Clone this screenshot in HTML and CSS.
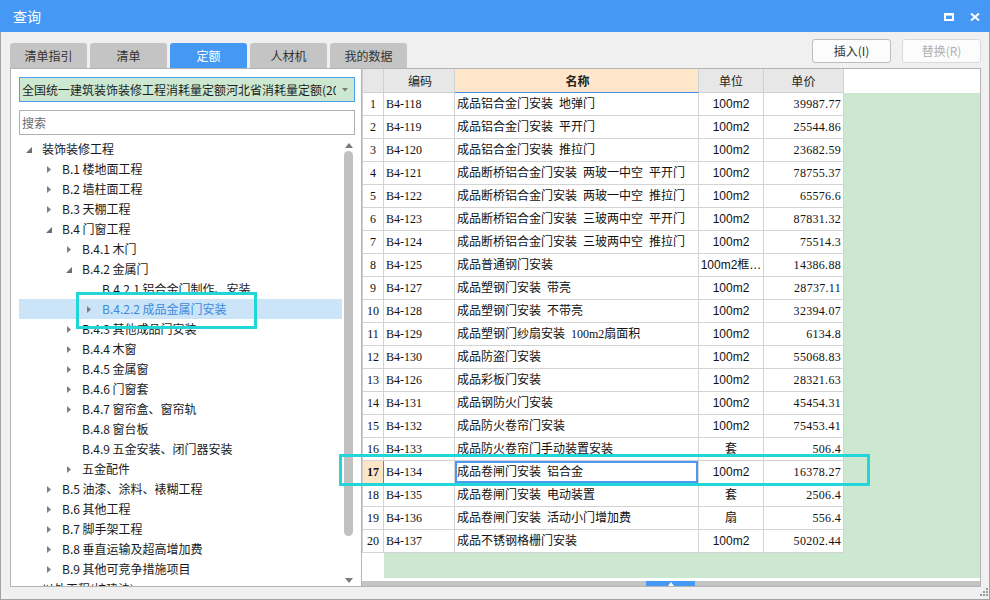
FILE: index.html
```html
<!DOCTYPE html>
<html lang="zh-CN">
<head>
<meta charset="utf-8">
<title>查询</title>
<link rel="stylesheet" href="styles.css">
</head>
<body>
<div class="win">
  <div class="titlebar">
    <span class="title">查询</span>
    <div class="tb-icons">
      <svg width="10" height="8" viewBox="0 0 10 8"><rect x="1" y="1" width="8" height="6" fill="none" stroke="#fff" stroke-width="2"/><rect x="0" y="0" width="10" height="2.6" fill="#fff"/></svg>
      <svg width="10" height="8" viewBox="0 0 10 8"><path d="M1 0.5 L9 7.5 M9 0.5 L1 7.5" stroke="#fff" stroke-width="2"/></svg>
    </div>
  </div>

  <div class="toolbar">
    <div class="tabs">
      <div class="tab">清单指引</div>
      <div class="tab">清单</div>
      <div class="tab active">定额</div>
      <div class="tab">人材机</div>
      <div class="tab">我的数据</div>
    </div>
    <div class="btns">
      <div class="btn">插入(I)</div>
      <div class="btn dis">替换(R)</div>
    </div>
  </div>

  <div class="content">
    <div class="left">
      <div class="combo">
        <span class="combo-text">全国统一建筑装饰装修工程消耗量定额河北省消耗量定额(2023)</span>
        <svg class="combo-arrow" width="6" height="4" viewBox="0 0 6 4"><polygon points="0,0 6,0 3,3.5" fill="#7a7a7a"/></svg>
      </div>
      <div class="search">搜索</div>
      <div class="tree-wrap">
        <div class="tree">
          <div class="trow l0"><span class="arr"><svg class="ex" width="6" height="6" viewBox="0 0 6 6"><polygon points="6,0 6,6 0,6" fill="#6e6e6e"/></svg></span>装饰装修工程</div>
          <div class="trow l1"><span class="arr"><svg class="co" width="4" height="7" viewBox="0 0 4 7"><polygon points="0,0 4,3.5 0,7" fill="#7f7f7f"/></svg></span>B.1 楼地面工程</div>
          <div class="trow l1"><span class="arr"><svg class="co" width="4" height="7" viewBox="0 0 4 7"><polygon points="0,0 4,3.5 0,7" fill="#7f7f7f"/></svg></span>B.2 墙柱面工程</div>
          <div class="trow l1"><span class="arr"><svg class="co" width="4" height="7" viewBox="0 0 4 7"><polygon points="0,0 4,3.5 0,7" fill="#7f7f7f"/></svg></span>B.3 天棚工程</div>
          <div class="trow l1"><span class="arr"><svg class="ex" width="6" height="6" viewBox="0 0 6 6"><polygon points="6,0 6,6 0,6" fill="#6e6e6e"/></svg></span>B.4 门窗工程</div>
          <div class="trow l2"><span class="arr"><svg class="co" width="4" height="7" viewBox="0 0 4 7"><polygon points="0,0 4,3.5 0,7" fill="#7f7f7f"/></svg></span>B.4.1 木门</div>
          <div class="trow l2"><span class="arr"><svg class="ex" width="6" height="6" viewBox="0 0 6 6"><polygon points="6,0 6,6 0,6" fill="#6e6e6e"/></svg></span>B.4.2 金属门</div>
          <div class="trow l3"><span class="arr"></span>B.4.2.1 铝合金门制作、安装</div>
          <div class="trow l3 sel"><span class="arr"><svg class="co" width="4" height="7" viewBox="0 0 4 7"><polygon points="0,0 4,3.5 0,7" fill="#7f7f7f"/></svg></span>B.4.2.2 成品金属门安装</div>
          <div class="trow l2"><span class="arr"><svg class="co" width="4" height="7" viewBox="0 0 4 7"><polygon points="0,0 4,3.5 0,7" fill="#7f7f7f"/></svg></span>B.4.3 其他成品门安装</div>
          <div class="trow l2"><span class="arr"><svg class="co" width="4" height="7" viewBox="0 0 4 7"><polygon points="0,0 4,3.5 0,7" fill="#7f7f7f"/></svg></span>B.4.4 木窗</div>
          <div class="trow l2"><span class="arr"><svg class="co" width="4" height="7" viewBox="0 0 4 7"><polygon points="0,0 4,3.5 0,7" fill="#7f7f7f"/></svg></span>B.4.5 金属窗</div>
          <div class="trow l2"><span class="arr"><svg class="co" width="4" height="7" viewBox="0 0 4 7"><polygon points="0,0 4,3.5 0,7" fill="#7f7f7f"/></svg></span>B.4.6 门窗套</div>
          <div class="trow l2"><span class="arr"><svg class="co" width="4" height="7" viewBox="0 0 4 7"><polygon points="0,0 4,3.5 0,7" fill="#7f7f7f"/></svg></span>B.4.7 窗帘盒、窗帘轨</div>
          <div class="trow l2"><span class="arr"></span>B.4.8 窗台板</div>
          <div class="trow l2"><span class="arr"></span>B.4.9 五金安装、闭门器安装</div>
          <div class="trow l2"><span class="arr"><svg class="co" width="4" height="7" viewBox="0 0 4 7"><polygon points="0,0 4,3.5 0,7" fill="#7f7f7f"/></svg></span>五金配件</div>
          <div class="trow l1"><span class="arr"><svg class="co" width="4" height="7" viewBox="0 0 4 7"><polygon points="0,0 4,3.5 0,7" fill="#7f7f7f"/></svg></span>B.5 油漆、涂料、裱糊工程</div>
          <div class="trow l1"><span class="arr"><svg class="co" width="4" height="7" viewBox="0 0 4 7"><polygon points="0,0 4,3.5 0,7" fill="#7f7f7f"/></svg></span>B.6 其他工程</div>
          <div class="trow l1"><span class="arr"><svg class="co" width="4" height="7" viewBox="0 0 4 7"><polygon points="0,0 4,3.5 0,7" fill="#7f7f7f"/></svg></span>B.7 脚手架工程</div>
          <div class="trow l1"><span class="arr"><svg class="co" width="4" height="7" viewBox="0 0 4 7"><polygon points="0,0 4,3.5 0,7" fill="#7f7f7f"/></svg></span>B.8 垂直运输及超高增加费</div>
          <div class="trow l1"><span class="arr"><svg class="co" width="4" height="7" viewBox="0 0 4 7"><polygon points="0,0 4,3.5 0,7" fill="#7f7f7f"/></svg></span>B.9 其他可竞争措施项目</div>
          <div class="trow l0"><span class="arr"></span>以外工程(扩建法)</div>
        </div>
        <div class="vscroll">
          <svg class="vs-up" width="8" height="5" viewBox="0 0 8 5"><polygon points="0,5 8,5 4,0" fill="#7a7a7a"/></svg>
          <div class="vthumb"></div>
          <svg class="vs-down" width="8" height="5" viewBox="0 0 8 5"><polygon points="0,0 8,0 4,5" fill="#7a7a7a"/></svg>
        </div>
      </div>
    </div>

    <div class="right">
      <div class="ghead">
        <div class="h c-no"></div>
        <div class="h c-code">编码</div>
        <div class="h c-name hname">名称</div>
        <div class="h c-unit">单位</div>
        <div class="h c-price hprice">单价</div>
      </div>
      <div class="gbody">
        <div class="row"><div class="c c-no">1</div><div class="c c-code">B4-118</div><div class="c c-name">成品铝合金门安装 地弹门</div><div class="c c-unit">100m2</div><div class="c c-price">39987.77</div></div>
        <div class="row"><div class="c c-no">2</div><div class="c c-code">B4-119</div><div class="c c-name">成品铝合金门安装 平开门</div><div class="c c-unit">100m2</div><div class="c c-price">25544.86</div></div>
        <div class="row"><div class="c c-no">3</div><div class="c c-code">B4-120</div><div class="c c-name">成品铝合金门安装 推拉门</div><div class="c c-unit">100m2</div><div class="c c-price">23682.59</div></div>
        <div class="row"><div class="c c-no">4</div><div class="c c-code">B4-121</div><div class="c c-name">成品断桥铝合金门安装 两玻一中空 平开门</div><div class="c c-unit">100m2</div><div class="c c-price">78755.37</div></div>
        <div class="row"><div class="c c-no">5</div><div class="c c-code">B4-122</div><div class="c c-name">成品断桥铝合金门安装 两玻一中空 推拉门</div><div class="c c-unit">100m2</div><div class="c c-price">65576.6</div></div>
        <div class="row"><div class="c c-no">6</div><div class="c c-code">B4-123</div><div class="c c-name">成品断桥铝合金门安装 三玻两中空 平开门</div><div class="c c-unit">100m2</div><div class="c c-price">87831.32</div></div>
        <div class="row"><div class="c c-no">7</div><div class="c c-code">B4-124</div><div class="c c-name">成品断桥铝合金门安装 三玻两中空 推拉门</div><div class="c c-unit">100m2</div><div class="c c-price">75514.3</div></div>
        <div class="row"><div class="c c-no">8</div><div class="c c-code">B4-125</div><div class="c c-name">成品普通钢门安装</div><div class="c c-unit">100m2框…</div><div class="c c-price">14386.88</div></div>
        <div class="row"><div class="c c-no">9</div><div class="c c-code">B4-127</div><div class="c c-name">成品塑钢门安装 带亮</div><div class="c c-unit">100m2</div><div class="c c-price">28737.11</div></div>
        <div class="row"><div class="c c-no">10</div><div class="c c-code">B4-128</div><div class="c c-name">成品塑钢门安装 不带亮</div><div class="c c-unit">100m2</div><div class="c c-price">32394.07</div></div>
        <div class="row"><div class="c c-no">11</div><div class="c c-code">B4-129</div><div class="c c-name">成品塑钢门纱扇安装 100m2扇面积</div><div class="c c-unit">100m2</div><div class="c c-price">6134.8</div></div>
        <div class="row"><div class="c c-no">12</div><div class="c c-code">B4-130</div><div class="c c-name">成品防盗门安装</div><div class="c c-unit">100m2</div><div class="c c-price">55068.83</div></div>
        <div class="row"><div class="c c-no">13</div><div class="c c-code">B4-126</div><div class="c c-name">成品彩板门安装</div><div class="c c-unit">100m2</div><div class="c c-price">28321.63</div></div>
        <div class="row"><div class="c c-no">14</div><div class="c c-code">B4-131</div><div class="c c-name">成品钢防火门安装</div><div class="c c-unit">100m2</div><div class="c c-price">45454.31</div></div>
        <div class="row"><div class="c c-no">15</div><div class="c c-code">B4-132</div><div class="c c-name">成品防火卷帘门安装</div><div class="c c-unit">100m2</div><div class="c c-price">75453.41</div></div>
        <div class="row"><div class="c c-no">16</div><div class="c c-code">B4-133</div><div class="c c-name">成品防火卷帘门手动装置安装</div><div class="c c-unit">套</div><div class="c c-price">506.4</div></div>
        <div class="row cur"><div class="c c-no">17</div><div class="c c-code">B4-134</div><div class="c c-name">成品卷闸门安装 铝合金</div><div class="c c-unit">100m2</div><div class="c c-price">16378.27</div></div>
        <div class="row"><div class="c c-no">18</div><div class="c c-code">B4-135</div><div class="c c-name">成品卷闸门安装 电动装置</div><div class="c c-unit">套</div><div class="c c-price">2506.4</div></div>
        <div class="row"><div class="c c-no">19</div><div class="c c-code">B4-136</div><div class="c c-name">成品卷闸门安装 活动小门增加费</div><div class="c c-unit">扇</div><div class="c c-price">556.4</div></div>
        <div class="row"><div class="c c-no">20</div><div class="c c-code">B4-137</div><div class="c c-name">成品不锈钢格栅门安装</div><div class="c c-unit">100m2</div><div class="c c-price">50202.44</div></div>
      </div>
      <div class="hgap"></div>
      <div class="hscroll">
        <div class="hthumb"><svg width="6" height="4" viewBox="0 0 6 4"><polygon points="0,4 6,4 3,0" fill="#fff"/></svg></div>
      </div>
    </div>
  </div>

  <div class="mark mark1"></div>
  <div class="mark mark2"></div>
  <svg class="grip" width="9" height="9" viewBox="0 0 9 9">
    <rect x="7" y="1" width="2" height="2" fill="#9a9a9a"/>
    <rect x="4" y="4" width="2" height="2" fill="#9a9a9a"/>
    <rect x="7" y="4" width="2" height="2" fill="#9a9a9a"/>
    <rect x="1" y="7" width="2" height="2" fill="#9a9a9a"/>
    <rect x="4" y="7" width="2" height="2" fill="#9a9a9a"/>
    <rect x="7" y="7" width="2" height="2" fill="#9a9a9a"/>
  </svg>
</div>
</body>
</html>
```

FILE: styles.css
```css
* { box-sizing: border-box; }
html, body { margin: 0; padding: 0; }
body {
  width: 990px;
  height: 600px;
  overflow: hidden;
  background: #f0f0f0;
  font-family: "Noto Sans CJK SC", "Microsoft YaHei", sans-serif;
  font-size: 12px;
  color: #222;
}

.win {
  position: relative;
  width: 990px;
  height: 600px;
  border: 1px solid #a3a3a3;
  border-top: 0;
  background: #f0f0f0;
  display: flex;
  flex-direction: column;
}

/* title bar */
.titlebar {
  height: 32px;
  margin: 0 -1px;
  background: #4599f5;
  color: #fff;
  display: flex;
  align-items: center;
  justify-content: space-between;
  padding: 0 10px 0 13px;
  flex: none;
}
.title { font-size: 14px; line-height: 32px; }
.tb-icons { display: flex; align-items: center; gap: 16px; padding-top: 1px; }
.tb-icons svg { display: block; }

/* toolbar: tabs + buttons */
.toolbar {
  height: 36px;
  flex: none;
  display: flex;
  justify-content: space-between;
  padding: 0 8px 0 9px;
}
.tabs { display: flex; gap: 3px; align-self: flex-end; }
.tab {
  width: 77px;
  height: 25px;
  line-height: 25px;
  text-align: center;
  background: #c4c4c4;
  border-radius: 3px 3px 0 0;
  color: #333;
}
.tab.active { background: #4599f5; color: #fff; }
.btns { display: flex; gap: 11px; padding-top: 7px; }
.btn {
  width: 79px;
  height: 24px;
  line-height: 22px;
  text-align: center;
  border: 1px solid #bcbcbc;
  border-radius: 3px;
  background: #fcfcfc;
  color: #333;
}
.btn.dis { color: #b0b0b0; border-color: #d9d9d9; }

/* content box */
.content {
  height: 519px;
  flex: none;
  margin: 0 8px 0 9px;
  border: 1px solid #b4b4b4;
  background: #fff;
  display: flex;
}

/* left pane */
.left {
  width: 350px;
  flex: none;
  padding: 8px 6px 0 8px;
  display: flex;
  flex-direction: column;
}
.combo {
  height: 25px;
  flex: none;
  border: 1px solid #4c9ff0;
  background: #cde8d0;
  display: flex;
  align-items: center;
  padding: 0 6px 0 2px;
  margin-bottom: 8px;
}
.combo-text {
  flex: 1;
  overflow: hidden;
  white-space: nowrap;
  line-height: 23px;
  color: #1e1e1e;
}
.combo-arrow { display: block; margin-left: 6px; flex: none; }
.search {
  height: 25px;
  flex: none;
  border: 1px solid #b0b0b0;
  line-height: 23px;
  padding-left: 2px;
  color: #6a6a6a;
  margin-bottom: 4px;
}
.tree-wrap {
  flex: 1;
  min-height: 0;
  display: flex;
  overflow: hidden;
}
.tree { flex: 1; min-width: 0; overflow: hidden; }
.trow {
  height: 20px;
  line-height: 20px;
  display: flex;
  align-items: center;
  white-space: nowrap;
  color: #1a1a1a;
}
.trow.l0 { padding-left: 3px; }
.trow.l1 { padding-left: 23px; }
.trow.l2 { padding-left: 43px; }
.trow.l3 { padding-left: 63px; }
.trow.sel { background: #cce4f8; color: #3d89df; }
.arr {
  width: 20px;
  flex: none;
  height: 20px;
  display: flex;
  align-items: center;
}
.arr .co { margin-left: 5px; margin-top: 1px; }
.arr .ex { margin-left: 4px; margin-top: 2px; }

.vscroll {
  width: 13px;
  flex: none;
  display: flex;
  flex-direction: column;
  align-items: center;
  padding: 4px 0 3px;
}
.vs-up, .vs-down { display: block; flex: none; }
.vthumb {
  width: 9px;
  height: 385px;
  margin-top: 3px;
  border-radius: 5px;
  background: #c1c1c1;
  flex: none;
}
.vs-down { margin-top: auto; }

/* right pane / grid */
.right {
  flex: 1;
  border-left: 1px solid #b4b4b4;
  display: flex;
  flex-direction: column;
}
.ghead { height: 24px; flex: none; display: flex; background: #fff; }
.h {
  height: 24px;
  line-height: 23px;
  text-align: center;
  background: #e7e7e7;
  border-right: 1px solid #d0d0d0;
  border-bottom: 1px solid #d0d0d0;
  color: #222;
}
.h.hname { background: #fde6c9; border-bottom-color: #3f8fee; font-weight: bold; }
.h.c-price { padding: 0; text-align: center; }
.h.c-unit { font-family: "Noto Sans CJK SC", sans-serif; }

.gbody {
  flex: 1;
  min-height: 0;
  background: linear-gradient(to right, #fff 22px, #cde8d0 22px);
}
.row { display: flex; height: 23px; }
.c {
  height: 23px;
  line-height: 22px;
  background: #fff;
  border-right: 1px solid #d3d3d3;
  border-bottom: 1px solid #d3d3d3;
  white-space: nowrap;
  overflow: hidden;
  font-family: "Liberation Serif", "Noto Sans CJK SC", serif;
  color: #111;
}
.c-no, .h.c-no { width: 22px; border-left: 1px solid #d0d0d0; text-align: center; }
.c-code { width: 71px; padding-left: 2px; }
.c-name { width: 244px; padding-left: 2px; word-spacing: 3px; }
.c-unit { width: 65px; text-align: center; font-family: "Liberation Sans", "Noto Sans CJK SC", sans-serif; }
.c-price { width: 80px; text-align: right; padding-right: 2px; letter-spacing: 0.3px; }

.row.cur .c-no { background: #fde5c8; font-weight: bold; border-right-color: #3f8fee; }
.row.cur .c-name { box-shadow: inset 0 0 0 2px #4d98f0; }

.hgap { height: 3px; flex: none; background: #fff; }
.hscroll {
  height: 5px;
  flex: none;
  background: #c4c4c4;
  display: flex;
}
.hthumb {
  width: 49px;
  height: 5px;
  margin-left: 284px;
  background: #4599f5;
  display: flex;
  align-items: center;
  justify-content: center;
}
.hthumb svg { display: block; }

/* annotation overlays */
.mark {
  position: absolute;
  border: 3px solid #22d5d8;
  pointer-events: none;
}
.mark1 { left: 75px; top: 292px; width: 181px; height: 37px; }
.mark2 { left: 338px; top: 454px; width: 531px; height: 32px; }

.grip { position: absolute; right: 1px; bottom: 3px; display: block; }
```
